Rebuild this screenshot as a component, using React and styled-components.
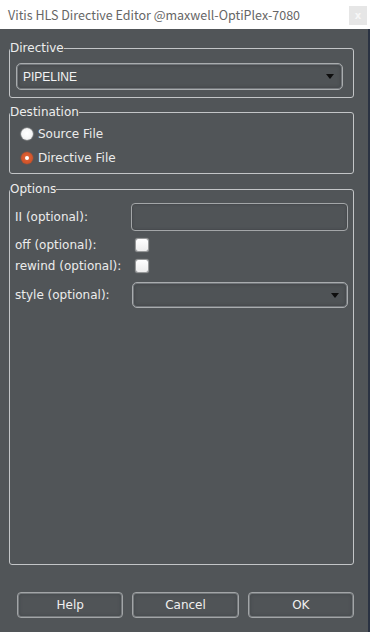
import React from "react";
import styled, { createGlobalStyle } from "styled-components";

const Global = createGlobalStyle`
  html, body { margin: 0; padding: 0; background: #515558; }
  * { box-sizing: border-box; }
  #root { width: 370px; height: 632px; }
`;

const Window = styled.div`
  width: 370px;
  height: 632px;
  display: flex;
  flex-direction: column;
  background: #515558;
  font-family: "DejaVu Sans", sans-serif;
  font-size: 12px;
  color: #ececec;
`;

const TitleBar = styled.div`
  height: 29px;
  flex: none;
  background: #ffffff;
  display: flex;
  align-items: flex-start;
  justify-content: space-between;
  padding: 0 3px 0 8px;
`;

const Title = styled.div`
  font-family: "Noto Sans CJK SC", "Noto Sans", sans-serif;
  font-size: 12.5px;
  line-height: 29px;
  color: #666666;
  white-space: nowrap;
`;

const CloseBtn = styled.div`
  margin-top: 6px;
  width: 18px;
  height: 19px;
  background: #e6e6e6;
  color: #f7f7f7;
  font-family: "DejaVu Sans", sans-serif;
  font-size: 10px;
  font-weight: bold;
  line-height: 19px;
  text-align: center;
`;

const Body = styled.div`
  flex: 1;
  display: flex;
  flex-direction: column;
  padding: 12px 14px 14px 9px;
  border-right: 2px solid #2a3242;
`;

const Group = styled.fieldset`
  margin: ${(p) => p.$mt || 0}px 0 0 0;
  padding: 0;
  width: 345px;
  border: 1px solid #c3c5c7;
  border-radius: 3px;
  min-inline-size: 0;
  flex: ${(p) => (p.$grow ? 1 : "none")};
  display: block;
`;

const Legend = styled.legend`
  padding: 0;
  margin: 0;
  font-size: 12px;
  line-height: 14px;
  color: #ededed;
`;

const Content = styled.div`
  padding: ${(p) => p.$pad};
`;

const Select = styled.div`
  position: relative;
  height: ${(p) => p.$h}px;
  width: ${(p) => p.$w}px;
  margin-left: ${(p) => p.$ml || 0}px;
  border: 1px solid #a9acae;
  border-radius: 5px;
  background: #4f5356;
  box-shadow: inset 0 0 0 1px #72767a, inset 0 0 3px 2px #44484b;
  display: flex;
  align-items: center;
  justify-content: space-between;
  padding: 0 8px 0 6px;
  font-family: "Liberation Sans", sans-serif;
  font-size: 12px;
  color: #f4f4f4;
`;

const Arrow = styled.div`
  width: 0;
  height: 0;
  border-left: 4.5px solid transparent;
  border-right: 4.5px solid transparent;
  border-top: 5px solid #0e0e0e;
`;

const RadioRow = styled.div`
  height: 24px;
  display: flex;
  align-items: center;
  gap: 5px;
  padding-left: 11px;
`;

const Radio = styled.div`
  width: 12px;
  height: 12px;
  border-radius: 50%;
  flex: none;
  display: flex;
  align-items: center;
  justify-content: center;
  background: ${(p) =>
    p.$on
      ? "radial-gradient(circle at 50% 45%, #e26a3c 0%, #d2542a 60%, #b9481f 100%)"
      : "radial-gradient(circle at 50% 45%, #ffffff 0%, #f6f6f6 55%, #d8d8d8 100%)"};
  box-shadow: 0 0 1px 0.5px ${(p) => (p.$on ? "rgba(200,80,40,0.5)" : "rgba(230,230,230,0.6)")};
`;

const Dot = styled.div`
  width: 4px;
  height: 4px;
  border-radius: 50%;
  background: #ffffff;
`;

const OptRow = styled.div`
  display: grid;
  grid-template-columns: 116px 217px;
  align-items: center;
  height: ${(p) => p.$h}px;
  margin-top: ${(p) => p.$mt || 0}px;
`;

const OptLabel = styled.div`
  color: #ececec;
  white-space: nowrap;
`;

const TextInput = styled.div`
  height: 28px;
  width: 217px;
  border: 1px solid #a3a6a8;
  border-radius: 4px;
  background: #505457;
  box-shadow: inset 0 0 2px 1px #46494c;
`;

const Check = styled.div`
  width: 12px;
  height: 12px;
  margin-left: 5px;
  border-radius: 2px;
  background: linear-gradient(#ffffff, #ececec);
  box-shadow: 0 0 1px 0.5px rgba(210, 210, 210, 0.6);
`;

const Buttons = styled.div`
  margin-top: 27px;
  padding-left: 8px;
  display: flex;
  gap: 9px;
`;

const Button = styled.div`
  width: 107px;
  height: 26px;
  border: 1px solid #a2a5a7;
  border-radius: 4px;
  background: #505457;
  box-shadow: inset 0 0 0 1px #75797c, inset 0 0 3px 2px #484c4f;
  display: flex;
  align-items: center;
  justify-content: center;
  color: #f0f0f0;
  font-size: 12px;
`;

export default function App() {
  return (
    <>
      <Global />
      <Window>
        <TitleBar>
          <Title>Vitis HLS Directive Editor @maxwell-OptiPlex-7080</Title>
          <CloseBtn>x</CloseBtn>
        </TitleBar>
        <Body>
          <Group>
            <Legend>Directive</Legend>
            <Content $pad="8px 10px 7px 6px">
              <Select $h={27} $w={327}>
                <span>PIPELINE</span>
                <Arrow />
              </Select>
            </Content>
          </Group>
          <Group $mt={7}>
            <Legend>Destination</Legend>
            <Content $pad="3px 0 3px 0">
              <RadioRow>
                <Radio />
                <span>Source File</span>
              </RadioRow>
              <RadioRow>
                <Radio $on>
                  <Dot />
                </Radio>
                <span>Directive File</span>
              </RadioRow>
            </Content>
          </Group>
          <Group $mt={8} $grow>
            <Legend>Options</Legend>
            <Content $pad="7px 5px 0 5px">
              <OptRow $h={28}>
                <OptLabel>II (optional):</OptLabel>
                <TextInput />
              </OptRow>
              <OptRow $h={28}>
                <OptLabel>off (optional):</OptLabel>
                <Check />
              </OptRow>
              <OptRow $h={14}>
                <OptLabel>rewind (optional):</OptLabel>
                <Check />
              </OptRow>
              <OptRow $h={26} $mt={9}>
                <OptLabel>style (optional):</OptLabel>
                <Select $h={26} $w={216} $ml={1}>
                  <span />
                  <Arrow />
                </Select>
              </OptRow>
            </Content>
          </Group>
          <Buttons>
            <Button>Help</Button>
            <Button>Cancel</Button>
            <Button>OK</Button>
          </Buttons>
        </Body>
      </Window>
    </>
  );
}
